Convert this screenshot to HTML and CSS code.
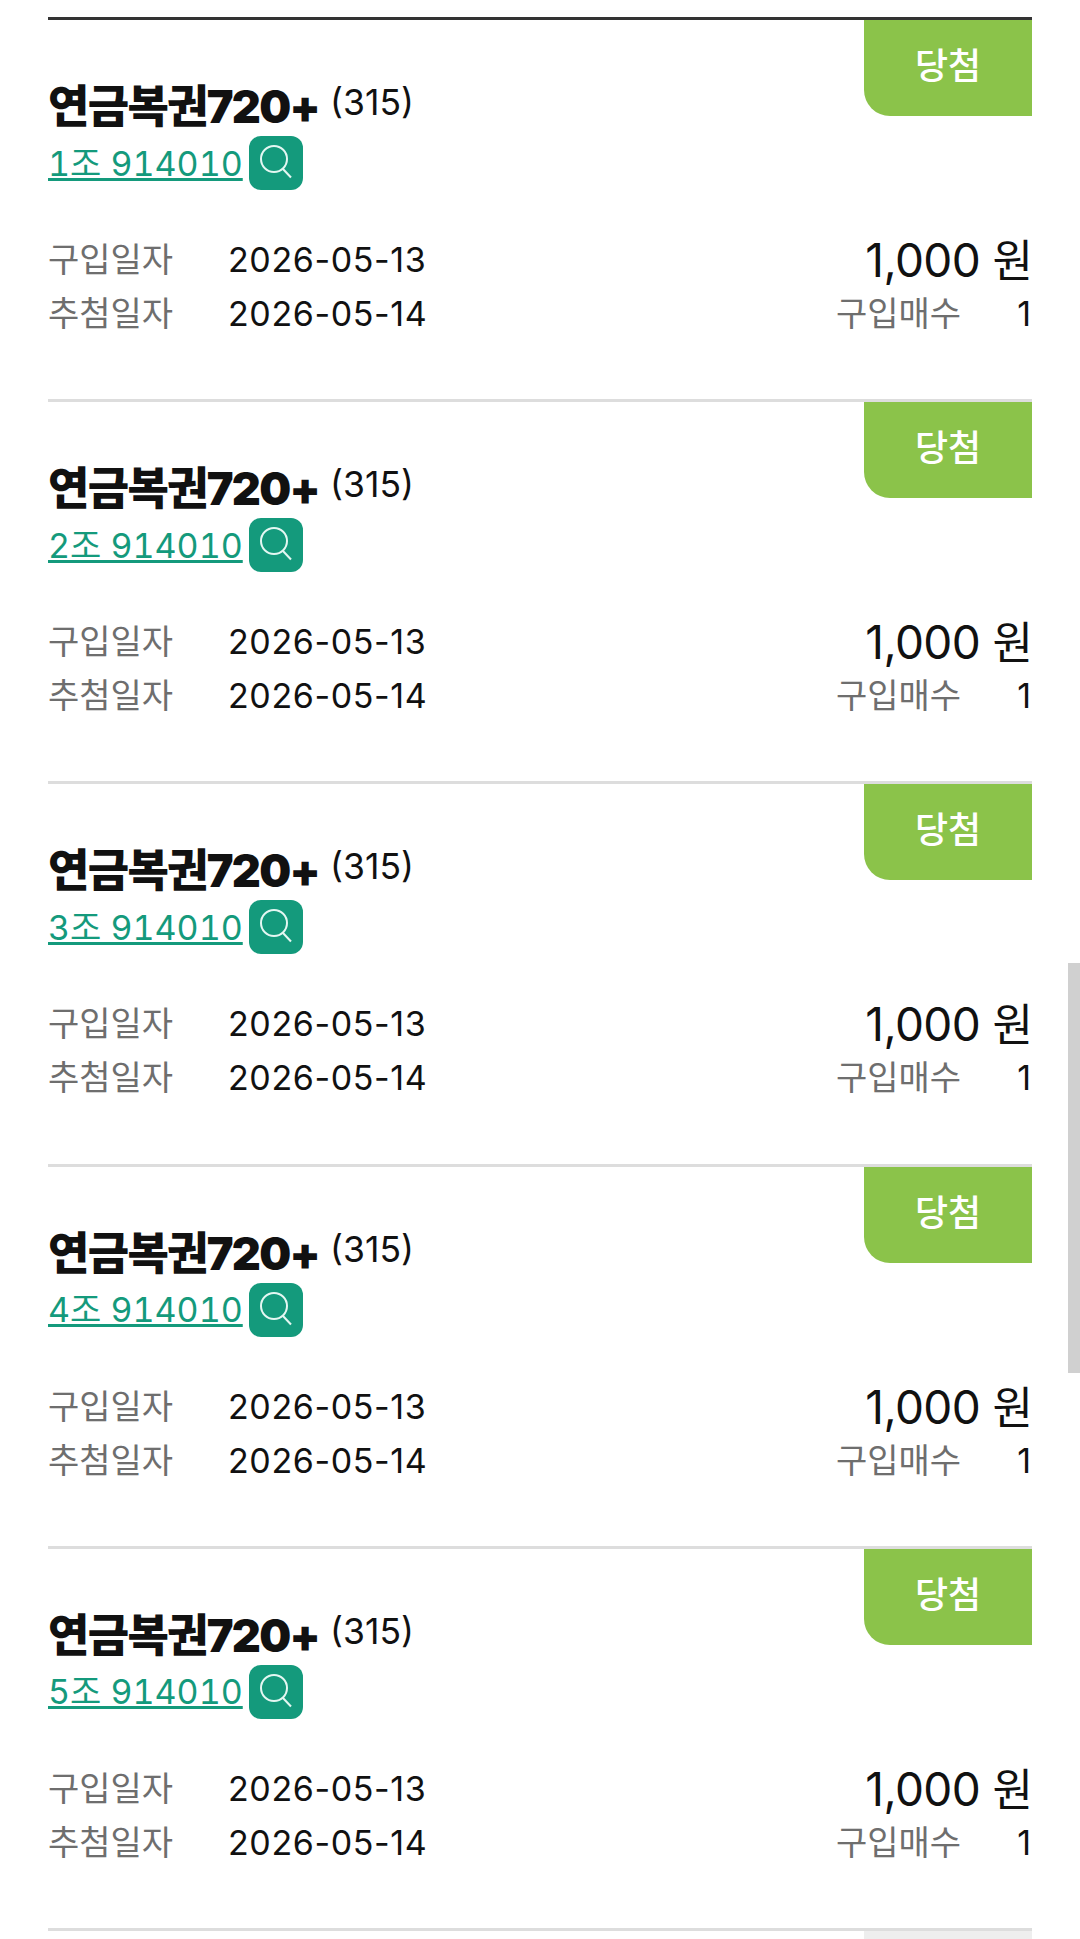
FILE: index.html
```html
<!DOCTYPE html>
<html lang="ko">
<head>
    <meta charset="utf-8">
    <title>구매내역</title>
    <link rel="stylesheet" href="styles.css">
</head>
<body>
    <div class="list">
        <div class="item first">
            <span class="badge">당첨</span>
            <div class="title"><strong>연금복권720+</strong> <span class="round">(315)</span></div>
            <div class="number"><a href="#">1조 914010</a><button class="search"><svg viewBox="0 0 54 54"><circle cx="25" cy="23" r="13"/><path d="M34 33L42 41.5"/></svg></button></div>
            <div class="info">
                <div class="dates">
                    <div class="row"><span class="label">구입일자</span><span class="date">2026-05-13</span></div>
                    <div class="row"><span class="label">추첨일자</span><span class="date">2026-05-14</span></div>
                </div>
                <div class="amount">
                    <div class="price">1,000 <span class="won">원</span></div>
                    <div class="row count"><span class="label">구입매수</span><span>1</span></div>
                </div>
            </div>
        </div>
        <div class="item">
            <span class="badge">당첨</span>
            <div class="title"><strong>연금복권720+</strong> <span class="round">(315)</span></div>
            <div class="number"><a href="#">2조 914010</a><button class="search"><svg viewBox="0 0 54 54"><circle cx="25" cy="23" r="13"/><path d="M34 33L42 41.5"/></svg></button></div>
            <div class="info">
                <div class="dates">
                    <div class="row"><span class="label">구입일자</span><span class="date">2026-05-13</span></div>
                    <div class="row"><span class="label">추첨일자</span><span class="date">2026-05-14</span></div>
                </div>
                <div class="amount">
                    <div class="price">1,000 <span class="won">원</span></div>
                    <div class="row count"><span class="label">구입매수</span><span>1</span></div>
                </div>
            </div>
        </div>
        <div class="item">
            <span class="badge">당첨</span>
            <div class="title"><strong>연금복권720+</strong> <span class="round">(315)</span></div>
            <div class="number"><a href="#">3조 914010</a><button class="search"><svg viewBox="0 0 54 54"><circle cx="25" cy="23" r="13"/><path d="M34 33L42 41.5"/></svg></button></div>
            <div class="info">
                <div class="dates">
                    <div class="row"><span class="label">구입일자</span><span class="date">2026-05-13</span></div>
                    <div class="row"><span class="label">추첨일자</span><span class="date">2026-05-14</span></div>
                </div>
                <div class="amount">
                    <div class="price">1,000 <span class="won">원</span></div>
                    <div class="row count"><span class="label">구입매수</span><span>1</span></div>
                </div>
            </div>
        </div>
        <div class="item">
            <span class="badge">당첨</span>
            <div class="title"><strong>연금복권720+</strong> <span class="round">(315)</span></div>
            <div class="number"><a href="#">4조 914010</a><button class="search"><svg viewBox="0 0 54 54"><circle cx="25" cy="23" r="13"/><path d="M34 33L42 41.5"/></svg></button></div>
            <div class="info">
                <div class="dates">
                    <div class="row"><span class="label">구입일자</span><span class="date">2026-05-13</span></div>
                    <div class="row"><span class="label">추첨일자</span><span class="date">2026-05-14</span></div>
                </div>
                <div class="amount">
                    <div class="price">1,000 <span class="won">원</span></div>
                    <div class="row count"><span class="label">구입매수</span><span>1</span></div>
                </div>
            </div>
        </div>
        <div class="item">
            <span class="badge">당첨</span>
            <div class="title"><strong>연금복권720+</strong> <span class="round">(315)</span></div>
            <div class="number"><a href="#">5조 914010</a><button class="search"><svg viewBox="0 0 54 54"><circle cx="25" cy="23" r="13"/><path d="M34 33L42 41.5"/></svg></button></div>
            <div class="info">
                <div class="dates">
                    <div class="row"><span class="label">구입일자</span><span class="date">2026-05-13</span></div>
                    <div class="row"><span class="label">추첨일자</span><span class="date">2026-05-14</span></div>
                </div>
                <div class="amount">
                    <div class="price">1,000 <span class="won">원</span></div>
                    <div class="row count"><span class="label">구입매수</span><span>1</span></div>
                </div>
            </div>
        </div>
        <div class="item next">
            <span class="badge"></span>
        </div>
    </div>
    <div class="scrollbar"></div>
</body>
</html>
```

FILE: styles.css
```css
html, body {
  margin: 0;
  height: 1939px;
  overflow: hidden;
  background: #fff;
}

body {
  font-family: Inter, "Noto Sans CJK KR", sans-serif;
  color: #111;
}

.list {
  height: 1922px;
  overflow: hidden;
  padding: 17px 48px 0 48px;
}

.item {
  position: relative;
  box-sizing: border-box;
  height: 382.2px;
  border-top: 3px solid #ddd;
  padding-top: 62px;
}

.item.first {
  border-top-color: #333;
}

.badge {
  position: absolute;
  top: 0;
  right: 0;
  width: 168px;
  height: 96px;
  border-bottom-left-radius: 26px;
  background: #8bc34a;
  color: #fff;
  font-size: 36px;
  font-weight: 500;
  line-height: 92px;
  text-align: center;
}

.next .badge {
  background: #eee;
}

.title {
  height: 50px;
  line-height: 50px;
  display: flex;
  align-items: flex-start;
  gap: 11px;
}

.title strong {
  font-size: 45px;
  font-weight: 900;
  letter-spacing: -1.7px;
}

.round {
  font-size: 35.5px;
  line-height: 40px;
  margin-top: 1px;
}

.number {
  display: flex;
  align-items: center;
  gap: 6px;
  height: 54px;
  margin-top: 4px;
  font-size: 34px;
  font-variant-numeric: tabular-nums;
}

.number a {
  margin-bottom: 4px;
  color: #149a7c;
}

.search {
  flex: none;
  width: 54px;
  height: 54px;
  padding: 0;
  border: 0;
  border-radius: 12px;
  background: #149a7c;
}

.search svg {
  display: block;
  width: 54px;
  height: 54px;
  fill: none;
  stroke: #e4f7f2;
  stroke-width: 2;
}

.info {
  display: flex;
  justify-content: space-between;
  margin-top: 43px;
}

.row {
  display: flex;
  height: 54px;
  line-height: 54px;
  font-size: 34px;
}

.label {
  width: 180px;
  color: #6e6e6e;
}

.date {
  letter-spacing: 0.6px;
}

.amount {
  margin-right: -1px;
  text-align: right;
}

.price {
  height: 54px;
  line-height: 54px;
  font-size: 46px;
  letter-spacing: -0.6px;
}

.won {
  font-size: 44px;
  letter-spacing: 0;
}

.count {
  justify-content: flex-end;
  padding-right: 2px;
}

.count .label {
  width: auto;
  margin-right: 56px;
}

.scrollbar {
  position: absolute;
  top: 963px;
  right: 0;
  width: 12px;
  height: 410px;
  background: #d0d0d0;
}
```
